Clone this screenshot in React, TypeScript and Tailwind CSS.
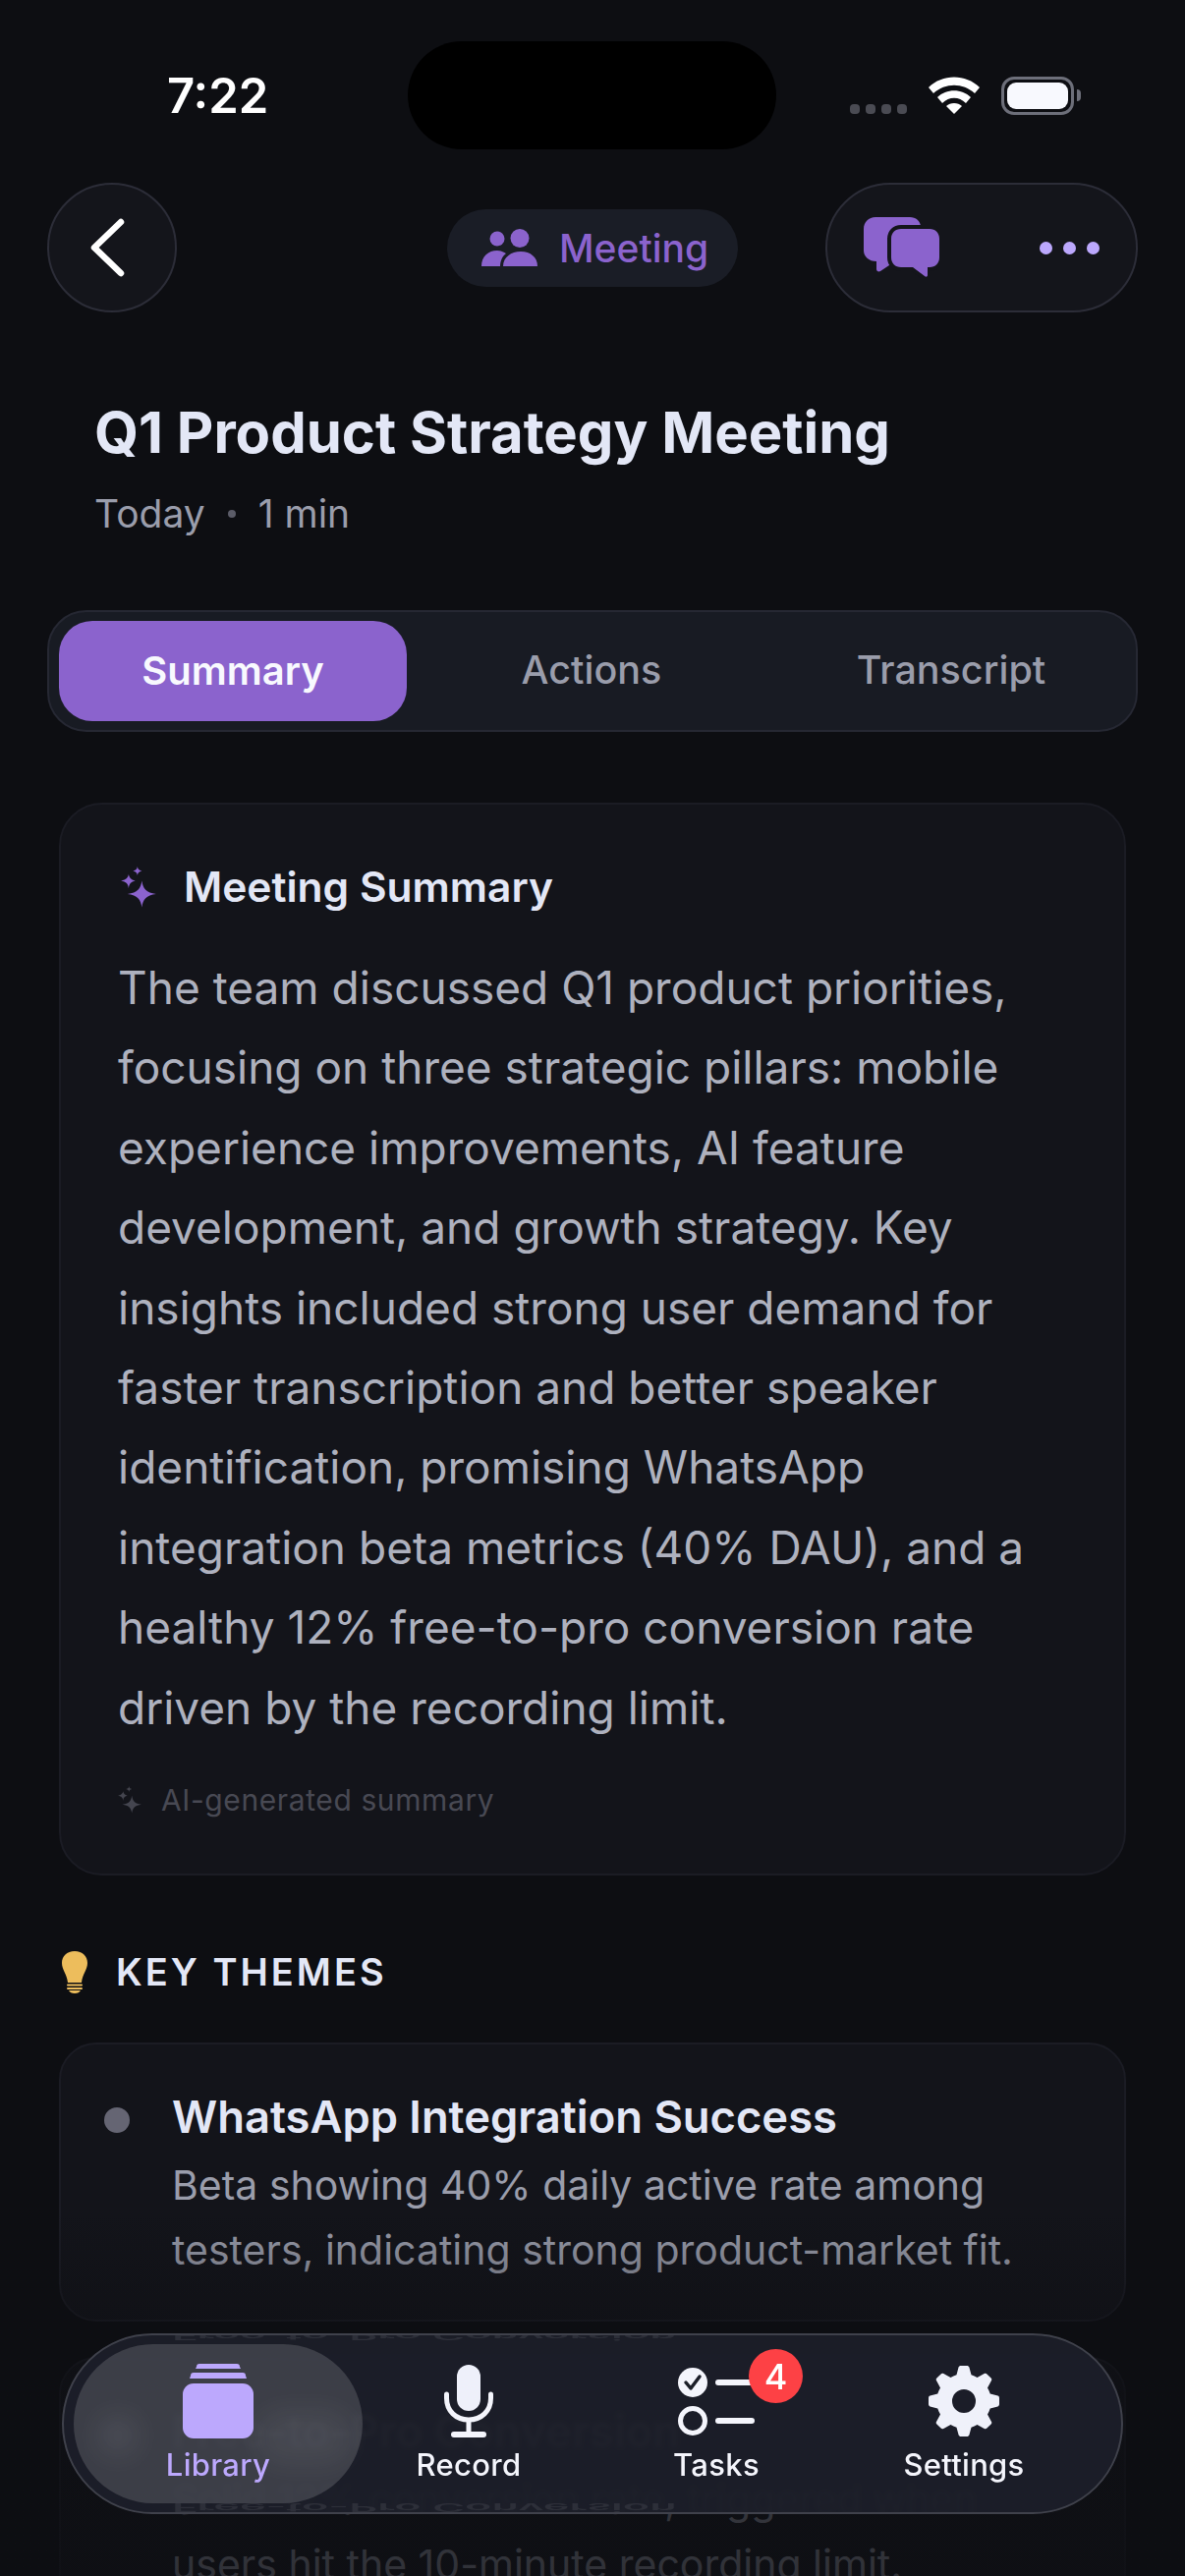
import React from "react";

const F = "font-['Inter',sans-serif]";

function Sparkles({ color, size }: { color: string; size: number }) {
  return (
    <svg width={size} height={size * 1.15} viewBox="0 0 32 37" fill={color}>
      <path d="M19 13 C20 20 23 24 32 25 C23 26 20 30 19 37 C18 30 15 26 6 25 C15 24 18 20 19 13Z" />
      <path d="M7 7 C7.5 10 9 12 13 13 C9 14 7.5 15.5 7 20 C6.5 15.5 5 14 0 13 C5 12 6.5 10 7 7Z" />
      <path d="M15 0 C15.3 2 16 3.4 19 4 C16 4.6 15.3 6 15 8 C14.7 6 14 4.6 11 4 C14 3.4 14.7 2 15 0Z" />
    </svg>
  );
}

function ChatBubbles() {
  return (
    <svg width="78" height="62" viewBox="0 0 78 62" fill="#8b63cd">
      <path d="M12 0 H47 C53 0 58 4 58 10 V36 C58 42 53 47 47 47 H29 L17 55 C15 56 13 55 13 53 V45 C5 45 0 40 0 34 V12 C0 5 5 0 12 0Z" />
      <path d="M38 12 H67 C73 12 77 16 77 22 V41 C77 47 73 51 67 51 H65 V59 C65 61 63 61 62 60 L50 51 H38 C32 51 28 47 28 41 V22 C28 16 32 12 38 12Z" stroke="#14151b" strokeWidth="8" paintOrder="stroke" />
    </svg>
  );
}

function People() {
  return (
    <svg width="58" height="38" viewBox="0 0 58 38" fill="#8b63cd">
      <circle cx="16" cy="10" r="7.5" />
      <circle cx="39" cy="9.5" r="9.5" />
      <path d="M0 38 C0 28 7 22 16 22 C19 22 22 23 25 25 C21 28 19 33 19 38Z" />
      <path d="M22 38 C22 29 30 23 40 23 C50 23 57 29 57 38Z" />
    </svg>
  );
}

function Wifi() {
  return (
    <svg width="52" height="38" viewBox="0 0 52 38" fill="#fff">
      <path d="M0 11 C14 -3 38 -3 52 11 L47 17 C35 6 17 6 5 17Z" />
      <path d="M9 21 C18 12 34 12 43 21 L38 27 C31 20 21 20 14 27Z" />
      <path d="M18 30 C22 26 30 26 34 30 L26 38Z" />
    </svg>
  );
}

function Battery() {
  return (
    <div className="flex items-center gap-[3px]">
      <div className="w-[74px] h-[39px] rounded-[13px] border-[3px] border-[#6d6f7a] p-[3px]">
        <div className="w-full h-full rounded-[9px] bg-[#f8f9fe]" />
      </div>
      <div className="w-[4px] h-[12px] rounded-r-[4px] bg-[#6d6f7a]" />
    </div>
  );
}

function LibraryIcon() {
  return (
    <svg width="72" height="76" viewBox="0 0 72 76" fill="#bca8fd">
      <path d="M14 3 C14 1 15 0 17 0 H55 C57 0 58 1 58 3 L59 5 H13Z" />
      <path d="M8 12 C8 10 9 9 11 9 H61 C63 9 64 10 64 12 L65 15 H7Z" />
      <rect x="0" y="20" width="72" height="56" rx="11" />
    </svg>
  );
}

function MicIcon() {
  return (
    <svg width="50" height="74" viewBox="0 0 50 74" fill="none">
      <rect x="13" y="0" width="24" height="47" rx="12" fill="#eef0fa" />
      <path d="M2.5 30 V34 C2.5 47 12 56 25 56 C38 56 47.5 47 47.5 34 V30" stroke="#f4f5fc" strokeWidth="5" strokeLinecap="round" />
      <path d="M25 56 V70" stroke="#f4f5fc" strokeWidth="5" />
      <rect x="7" y="68" width="36" height="6" rx="3" fill="#f4f5fc" />
    </svg>
  );
}

function TasksIcon() {
  return (
    <svg width="78" height="69" viewBox="0 0 78 69" fill="none">
      <circle cx="15" cy="15" r="15" fill="#f4f5fc" />
      <path d="M8 15 L13 21 L22 9" stroke="#1c1f29" strokeWidth="3.5" strokeLinecap="round" strokeLinejoin="round" />
      <circle cx="15" cy="54" r="12.5" stroke="#f4f5fc" strokeWidth="5" />
      <rect x="38" y="12" width="40" height="6" rx="3" fill="#f4f5fc" />
      <rect x="38" y="51" width="40" height="6" rx="3" fill="#f4f5fc" />
    </svg>
  );
}

function GearIcon() {
  return (
    <svg width="72" height="72" viewBox="0 0 24 24" fill="#eff1fa">
      <path
        fillRule="evenodd"
        d="M10.2 0.4 C10.4 0.1 10.7 0 11 0 H13 C13.4 0 13.7 0.2 13.8 0.5 L14.5 3.1 C15.2 3.3 15.9 3.6 16.5 4 L18.9 2.7 C19.2 2.5 19.6 2.6 19.8 2.8 L21.2 4.2 C21.5 4.5 21.5 4.8 21.3 5.1 L20 7.5 C20.4 8.1 20.7 8.8 20.9 9.5 L23.5 10.2 C23.8 10.3 24 10.6 24 11 V13 C24 13.4 23.8 13.7 23.5 13.8 L20.9 14.5 C20.7 15.2 20.4 15.9 20 16.5 L21.3 18.9 C21.5 19.2 21.5 19.5 21.2 19.8 L19.8 21.2 C19.5 21.5 19.2 21.5 18.9 21.3 L16.5 20 C15.9 20.4 15.2 20.7 14.5 20.9 L13.8 23.5 C13.7 23.8 13.4 24 13 24 H11 C10.6 24 10.3 23.8 10.2 23.5 L9.5 20.9 C8.8 20.7 8.1 20.4 7.5 20 L5.1 21.3 C4.8 21.5 4.5 21.5 4.2 21.2 L2.8 19.8 C2.5 19.5 2.5 19.2 2.7 18.9 L4 16.5 C3.6 15.9 3.3 15.2 3.1 14.5 L0.5 13.8 C0.2 13.7 0 13.4 0 13 V11 C0 10.6 0.2 10.3 0.5 10.2 L3.1 9.5 C3.3 8.8 3.6 8.1 4 7.5 L2.7 5.1 C2.5 4.8 2.5 4.5 2.8 4.2 L4.2 2.8 C4.5 2.5 4.8 2.5 5.1 2.7 L7.5 4 C8.1 3.6 8.8 3.3 9.5 3.1Z M12 8 A4 4 0 1 0 12 16 A4 4 0 1 0 12 8Z"
      />
    </svg>
  );
}

function Bulb() {
  return (
    <svg width="26" height="43" viewBox="0 0 26 43" fill="#edbd5c">
      <path d="M13 0 C21 0 26 5 26 12 C26 19 21 23 20 32 H6 C5 23 0 19 0 12 C0 5 5 0 13 0Z" />
      <rect x="5" y="33.5" width="16" height="2" rx="1" />
      <rect x="5" y="37" width="16" height="2" rx="1" />
      <path d="M7 40 H19 C18 42 16 43 13 43 C10 43 8 42 7 40Z" />
    </svg>
  );
}

function Theme({ title, lines }: { title: string; lines: string[] }) {
  return (
    <div className="flex gap-[43px] h-[284px] rounded-[38px] border-2 border-[#1b1c24] bg-[#13141a] pl-[44px] pt-[49px] shrink-0">
      <div className="w-[26px] h-[26px] mt-[15px] rounded-full bg-[#656573] shrink-0" />
      <div>
        <div className="text-[45.3px] leading-[50px] font-semibold text-[#e3e7f6]">{title}</div>
        <div className="mt-[12px] text-[41px] leading-[65.5px] text-[#9a9dab]">
          {lines.map((l) => (
            <div key={l} className="whitespace-nowrap">{l}</div>
          ))}
        </div>
      </div>
    </div>
  );
}

function NavItem({ label, icon, active, badge }: { label: string; icon: React.ReactNode; active?: boolean; badge?: string }) {
  return (
    <div className={`relative flex flex-col items-center h-[162px] pt-[20px] ${active ? "w-[294px] -ml-[21px] -mr-[18px] rounded-[81px] bg-white/15" : "w-[252px]"}`}>
      {active && <div className="absolute left-[20px] top-[68px] w-[50px] h-[50px] rounded-full bg-white/5 blur-md" />}
      {active && <div className="absolute left-[185px] top-[65px] w-[100px] h-[60px] rounded-full bg-white/5 blur-md" />}
      <div className="relative h-[76px] flex items-center justify-center">
        {icon}
        {badge && (
          <div className="absolute left-[72px] top-[-15px] w-[55px] h-[55px] rounded-full bg-[#fd4145] flex items-center justify-center text-[36px] text-white font-medium">
            {badge}
          </div>
        )}
      </div>
      <div className={`relative mt-[7px] text-[31px] leading-[40px] font-medium tracking-[0.3px] ${active ? "text-[#bca8fd]" : "text-[#f4f5fc]"}`}>{label}</div>
    </div>
  );
}

export default function App() {
  return (
    <div className={`relative w-[1206px] h-[2622px] overflow-hidden bg-[#0d0e12] ${F}`}>
      <div className="h-[186px] flex items-start pt-[42px] pl-[170px] pr-[106px]">
        <div className="w-[245px] h-[110px] flex items-center">
          <span className="text-[49px] font-semibold text-white leading-none">7:22</span>
        </div>
        <div className="w-[375px] h-[110px] rounded-[55px] bg-black" />
        <div className="flex-1 flex items-center justify-end h-[110px] gap-[22px]">
          <div className="flex gap-[6px] mt-[28px]">
            <div className="w-[10px] h-[10px] rounded-[4px] bg-[#4a4b53]" />
            <div className="w-[10px] h-[10px] rounded-[4px] bg-[#4a4b53]" />
            <div className="w-[10px] h-[10px] rounded-[4px] bg-[#4a4b53]" />
            <div className="w-[10px] h-[10px] rounded-[4px] bg-[#4a4b53]" />
          </div>
          <Wifi />
          <Battery />
        </div>
      </div>

      <div className="flex items-center justify-between mx-[48px] h-[132px]">
        <div className="w-[132px] h-[132px] rounded-full border-2 border-[#2c2d38] bg-[#14151b] flex items-center justify-center">
          <svg width="40" height="60" viewBox="0 0 40 60" fill="none" className="mr-[8px]">
            <path d="M33 4 L6 30 L33 56" stroke="#fff" strokeWidth="6.5" strokeLinecap="round" strokeLinejoin="round" />
          </svg>
        </div>
        <div className="ml-[186px] w-[296px] h-[79px] rounded-full bg-[#1a1d26] flex items-center gap-[21px] pl-[35px]">
          <People />
          <span className="text-[39px] font-medium text-[#8b63cd] leading-none">Meeting</span>
        </div>
        <div className="w-[318px] h-[132px] rounded-full border-2 border-[#2c2d38] bg-[#14151b] flex items-center justify-between pl-[37px] pr-[37px]">
          <ChatBubbles />
          <div className="flex gap-[11px]">
            <div className="w-[13px] h-[13px] rounded-full bg-[#bca8fd]" />
            <div className="w-[13px] h-[13px] rounded-full bg-[#bca8fd]" />
            <div className="w-[13px] h-[13px] rounded-full bg-[#bca8fd]" />
          </div>
        </div>
      </div>

      <div className="pl-[96px] mt-[90px]">
        <h1 className="text-[58px] leading-[64px] font-bold text-[#e3e7f6]">Q1 Product Strategy Meeting</h1>
        <div className="mt-[28px] flex items-center text-[39px] leading-[46px] text-[#9a9dab]">
          <span>Today</span>
          <span className="mx-[23px] w-[8px] h-[8px] rounded-full bg-[#5b5c68]" />
          <span>1 min</span>
        </div>
      </div>

      <div className="mt-[75px] mx-[48px] h-[124px] rounded-[40px] border-2 border-[#262833] bg-[#181b23] flex items-center pl-[10px] pr-[10px]">
        <div className="w-[354px] h-[102px] rounded-[34px] bg-[#8b63cd] flex items-center justify-center text-[40px] font-semibold text-[#f8f9fe]">Summary</div>
        <div className="w-[376px] flex justify-center text-[39.5px] font-medium text-[#9a9dab]">Actions</div>
        <div className="flex-1 flex justify-center text-[39.5px] font-medium text-[#9a9dab]">Transcript</div>
      </div>

      <div className="mt-[72px] mx-[60px] h-[1092px] rounded-[44px] border-2 border-[#1b1c24] bg-[#13141a] pl-[58px] pt-[58px]">
        <div className="flex items-center gap-[28px] h-[50px] ml-[3px] mt-[1px]">
          <Sparkles color="#8b63cd" size={36} />
          <span className="text-[42.5px] font-semibold text-[#e3e7f6] leading-none">Meeting Summary</span>
        </div>
        <div className="mt-[37px] text-[46px] leading-[81.4px] text-[#aeb1be]">
          <div className="whitespace-nowrap">The team discussed Q1 product priorities,</div>
          <div className="whitespace-nowrap">focusing on three strategic pillars: mobile</div>
          <div className="whitespace-nowrap">experience improvements, AI feature</div>
          <div className="whitespace-nowrap">development, and growth strategy. Key</div>
          <div className="whitespace-nowrap">insights included strong user demand for</div>
          <div className="whitespace-nowrap">faster transcription and better speaker</div>
          <div className="whitespace-nowrap">identification, promising WhatsApp</div>
          <div className="whitespace-nowrap">integration beta metrics (40% DAU), and a</div>
          <div className="whitespace-nowrap">healthy 12% free-to-pro conversion rate</div>
          <div className="whitespace-nowrap">driven by the recording limit.</div>
        </div>
        <div className="mt-[35px] flex items-center gap-[20px] h-[36px]">
          <Sparkles color="#44454f" size={24} />
          <span className="text-[30px] text-[#484953] tracking-[0.6px]">AI-generated summary</span>
        </div>
      </div>

      <div className="mt-[77px] ml-[63px] flex items-center gap-[29px] h-[43px]">
        <Bulb />
        <span className="text-[38px] font-semibold text-[#e3e7f6] tracking-[3px]">KEY THEMES</span>
      </div>

      <div className="mt-[50px] mx-[60px] flex flex-col gap-[36px]">
        <Theme title="WhatsApp Integration Success" lines={["Beta showing 40% daily active rate among", "testers, indicating strong product-market fit."]} />
        <Theme title="Free-to-Pro Conversion" lines={["Solid 12% conversion rate, triggered when", "users hit the 10-minute recording limit."]} />
      </div>

      <div className="absolute left-0 right-0 top-[2250px] bottom-0 bg-gradient-to-b from-transparent via-[#0d0e12]/70 via-50% to-[#0d0e12]/75" />

      <div className="absolute left-[63px] top-[2375px] w-[1080px] h-[184px] rounded-[92px] border-2 border-[#3f414b] bg-[#1c1f29]/95 backdrop-blur-[2px] overflow-hidden flex items-center pl-[31px]">
        <div aria-hidden="true" className="absolute left-[110px] top-[-25px] h-[50px] text-[45px] leading-[50px] font-semibold whitespace-nowrap text-[#2d2f39] [transform:scaleY(-0.25)]">Free-to-Pro Conversion</div>
        <div aria-hidden="true" className="absolute left-[110px] top-[150px] h-[50px] text-[45px] leading-[50px] font-semibold whitespace-nowrap text-[#2d2f39] [transform:scaleY(-0.25)]">Free-to-Pro Conversion</div>
        <NavItem active label="Library" icon={<LibraryIcon />} />
        <NavItem label="Record" icon={<MicIcon />} />
        <NavItem label="Tasks" icon={<TasksIcon />} badge="4" />
        <NavItem label="Settings" icon={<GearIcon />} />
      </div>
    </div>
  );
}
